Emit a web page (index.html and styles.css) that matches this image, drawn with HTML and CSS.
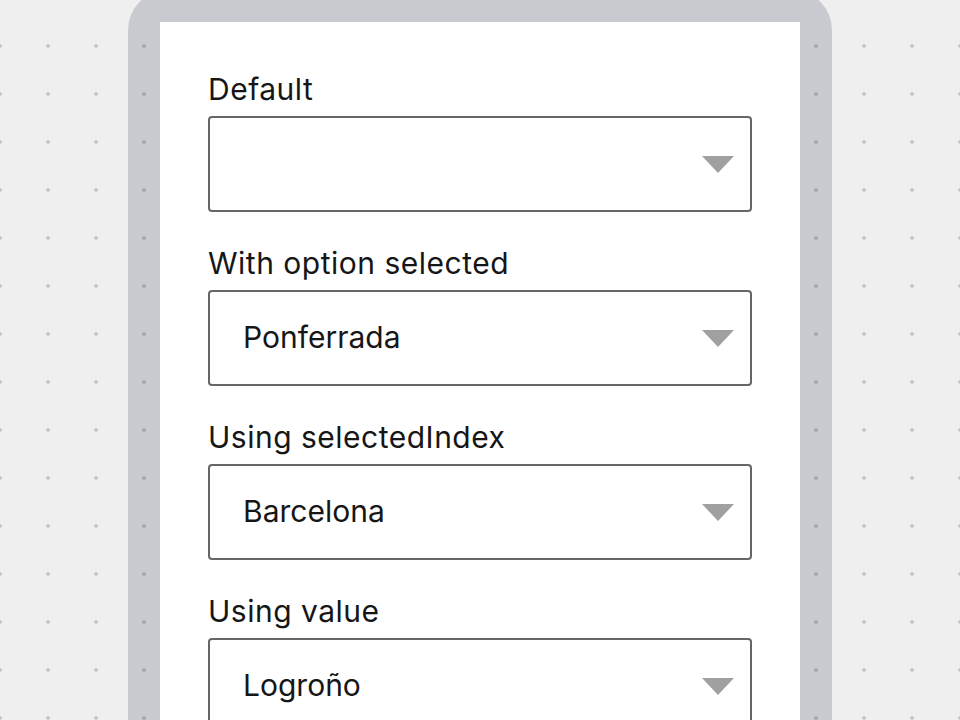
FILE: index.html
```html
<!DOCTYPE html>
<html lang="en">
<head>
<meta charset="utf-8">
<title>Select examples</title>
<link rel="stylesheet" href="styles.css">
</head>
<body>
<div class="device">
  <div class="screen">
    <div class="field">
      <label class="label">Default</label>
      <div class="select"><span class="value"></span><span class="caret"></span></div>
    </div>
    <div class="field">
      <label class="label">With option selected</label>
      <div class="select"><span class="value">Ponferrada</span><span class="caret"></span></div>
    </div>
    <div class="field">
      <label class="label">Using selectedIndex</label>
      <div class="select"><span class="value">Barcelona</span><span class="caret"></span></div>
    </div>
    <div class="field">
      <label class="label">Using value</label>
      <div class="select"><span class="value">Logroño</span><span class="caret"></span></div>
    </div>
  </div>
</div>
</body>
</html>
```
FILE: styles.css
```css
html, body {
  margin: 0;
  height: 100%;
  overflow: hidden;
}
body {
  background-color: #efefef;
  background-image: radial-gradient(circle at 24px 24px, #c9c9c9 1.6px, transparent 2.2px);
  background-size: 48px 48px;
  background-position: -24px 22px;
  background-attachment: fixed;
  font-family: Inter, "Noto Sans", "Liberation Sans", sans-serif;
  color: #161616;
}
.device {
  width: 640px;
  margin: -10px auto 0;
  padding: 32px;
  border-radius: 40px;
  background-color: #c9cacf;
  background-image: radial-gradient(circle at 24px 24px, #a9aaae 1.6px, transparent 2.2px);
  background-size: 48px 48px;
  background-position: -24px 22px;
  background-attachment: fixed;
}
.screen {
  background: #ffffff;
  padding: 48px 48px 40px;
  height: 800px;
}
.field {
  display: flex;
  flex-direction: column;
  margin-bottom: 32px;
}
.label {
  font-size: 30px;
  line-height: 38px;
  letter-spacing: 0.5px;
  margin-bottom: 8px;
}
.select {
  box-sizing: border-box;
  height: 96px;
  border: 2px solid #666666;
  border-radius: 4px;
  display: flex;
  align-items: center;
  justify-content: space-between;
  padding: 0 16px 0 33px;
}
.value {
  font-size: 30px;
  line-height: 38px;
  margin-top: -2px;
}
.caret {
  width: 0;
  height: 0;
  border-left: 16px solid transparent;
  border-right: 16px solid transparent;
  border-top: 17px solid #a0a0a0;
}
```
